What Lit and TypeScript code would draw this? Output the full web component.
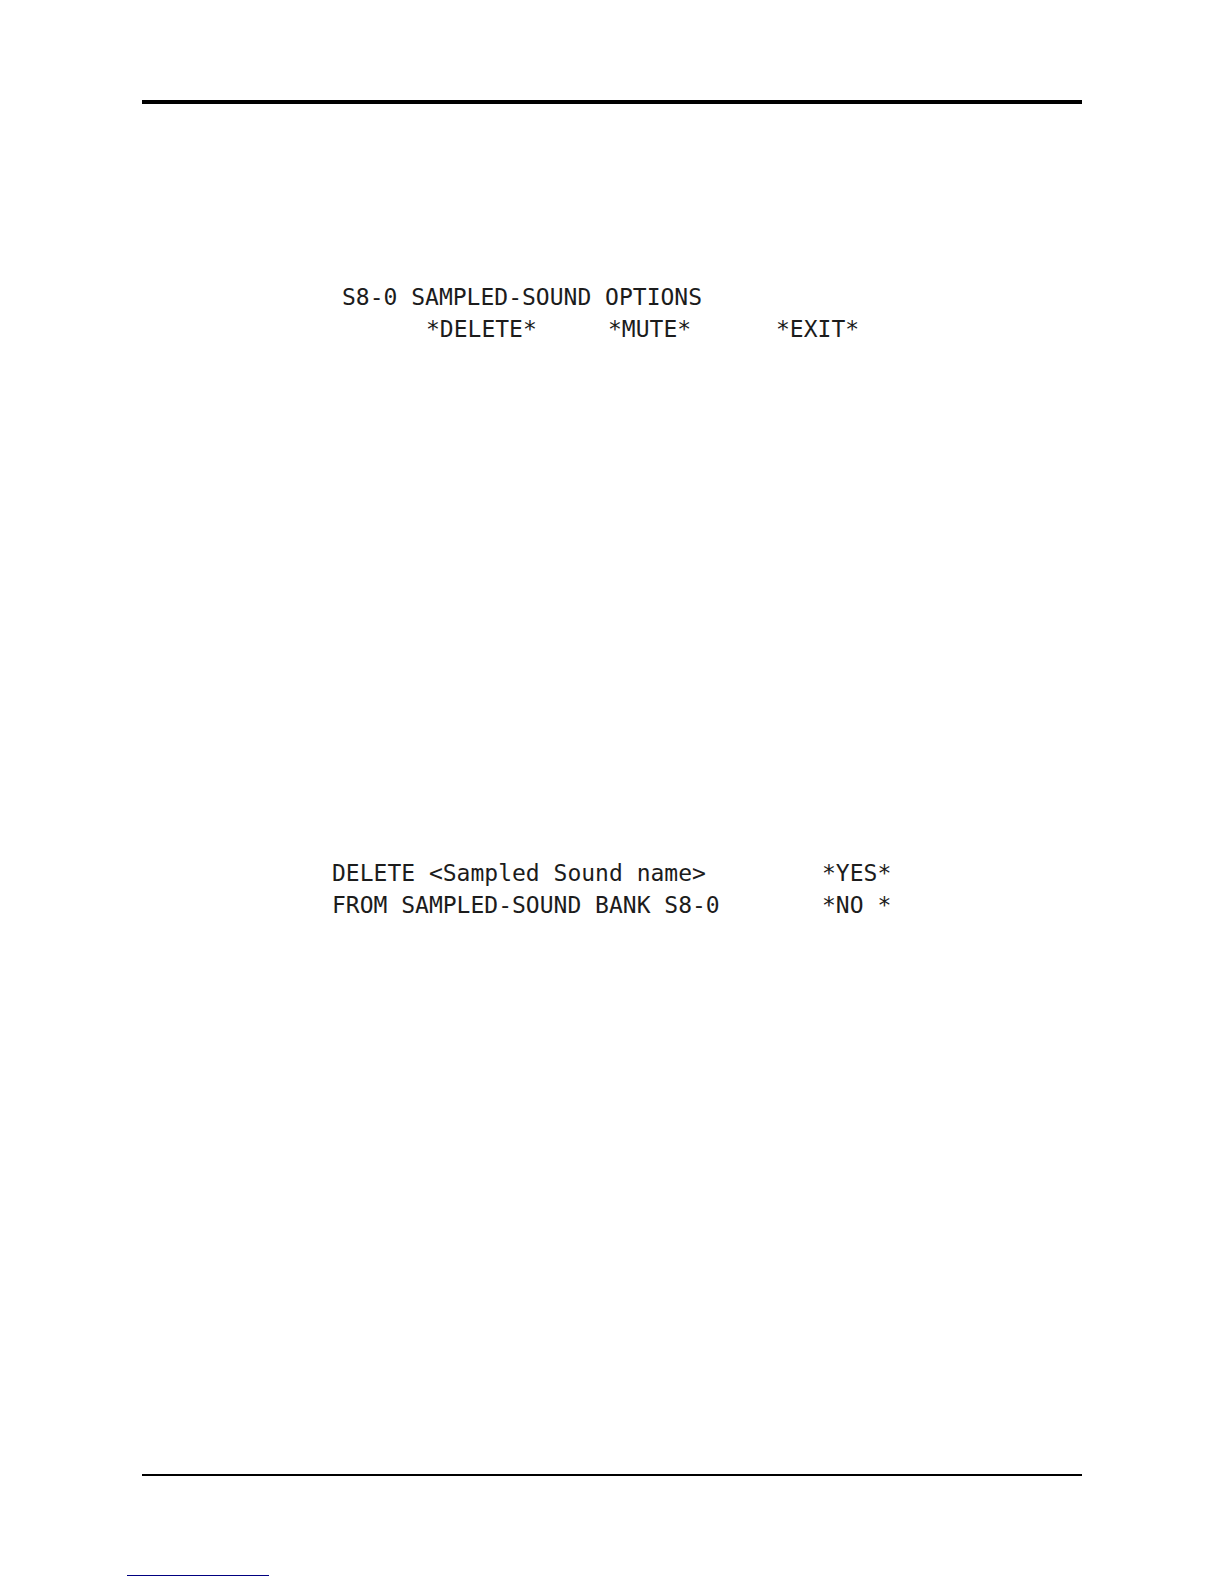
import { LitElement, html, css } from "lit";
import { customElement } from "lit/decorators.js";

@customElement("app-root")
export class AppRoot extends LitElement {
  static styles = css`
    :host {
      display: block;
      background: #fff;
      color: #1c1c1c;
    }
    .page {
      box-sizing: border-box;
      min-height: 100vh;
      padding: 100px 142px 8px;
      display: flex;
      flex-direction: column;
    }
    .rule {
      width: 100%;
      margin: 0;
      border: 0;
      border-top: 4px solid #000;
    }
    .thin {
      border-top-width: 2px;
      margin-top: auto;
    }
    .screen {
      display: grid;
      grid-template-columns: repeat(40, 14px);
      align-self: center;
      grid-auto-rows: 32px;
      white-space: pre;
      font: 23px/32px "DejaVu Sans Mono", monospace;
    }
    .options {
      margin-top: 177px;
      padding-left: 20px;
    }
    .confirm {
      margin-top: 512px;
    }
    .c1 { grid-column: 1 / span 29; }
    .c7 { grid-column: 7 / span 8; }
    .c20 { grid-column: 20 / span 6; }
    .c32 { grid-column: 32 / span 6; }
    .c36 { grid-column: 36 / span 5; }
    button {
      padding: 0;
      border: 0;
      background: none;
      color: inherit;
      font: inherit;
      text-align: left;
      white-space: pre;
    }
    .link {
      align-self: flex-start;
      width: 142px;
      height: 1px;
      margin: 99px 0 0 -15px;
      background: #000080;
    }
  `;

  render() {
    return html`
      <main class="page">
        <hr class="rule" />
        <section class="screen options">
          <span class="c1">S8-0 SAMPLED-SOUND OPTIONS</span>
          <button class="c7">*DELETE*</button>
          <button class="c20">*MUTE*</button>
          <button class="c32">*EXIT*</button>
        </section>
        <section class="screen confirm">
          <span class="c1">DELETE &lt;Sampled Sound name&gt;</span>
          <button class="c36">*YES*</button>
          <span class="c1">FROM SAMPLED-SOUND BANK S8-0</span>
          <button class="c36">*NO *</button>
        </section>
        <hr class="rule thin" />
        <div class="link"></div>
      </main>
    `;
  }
}
